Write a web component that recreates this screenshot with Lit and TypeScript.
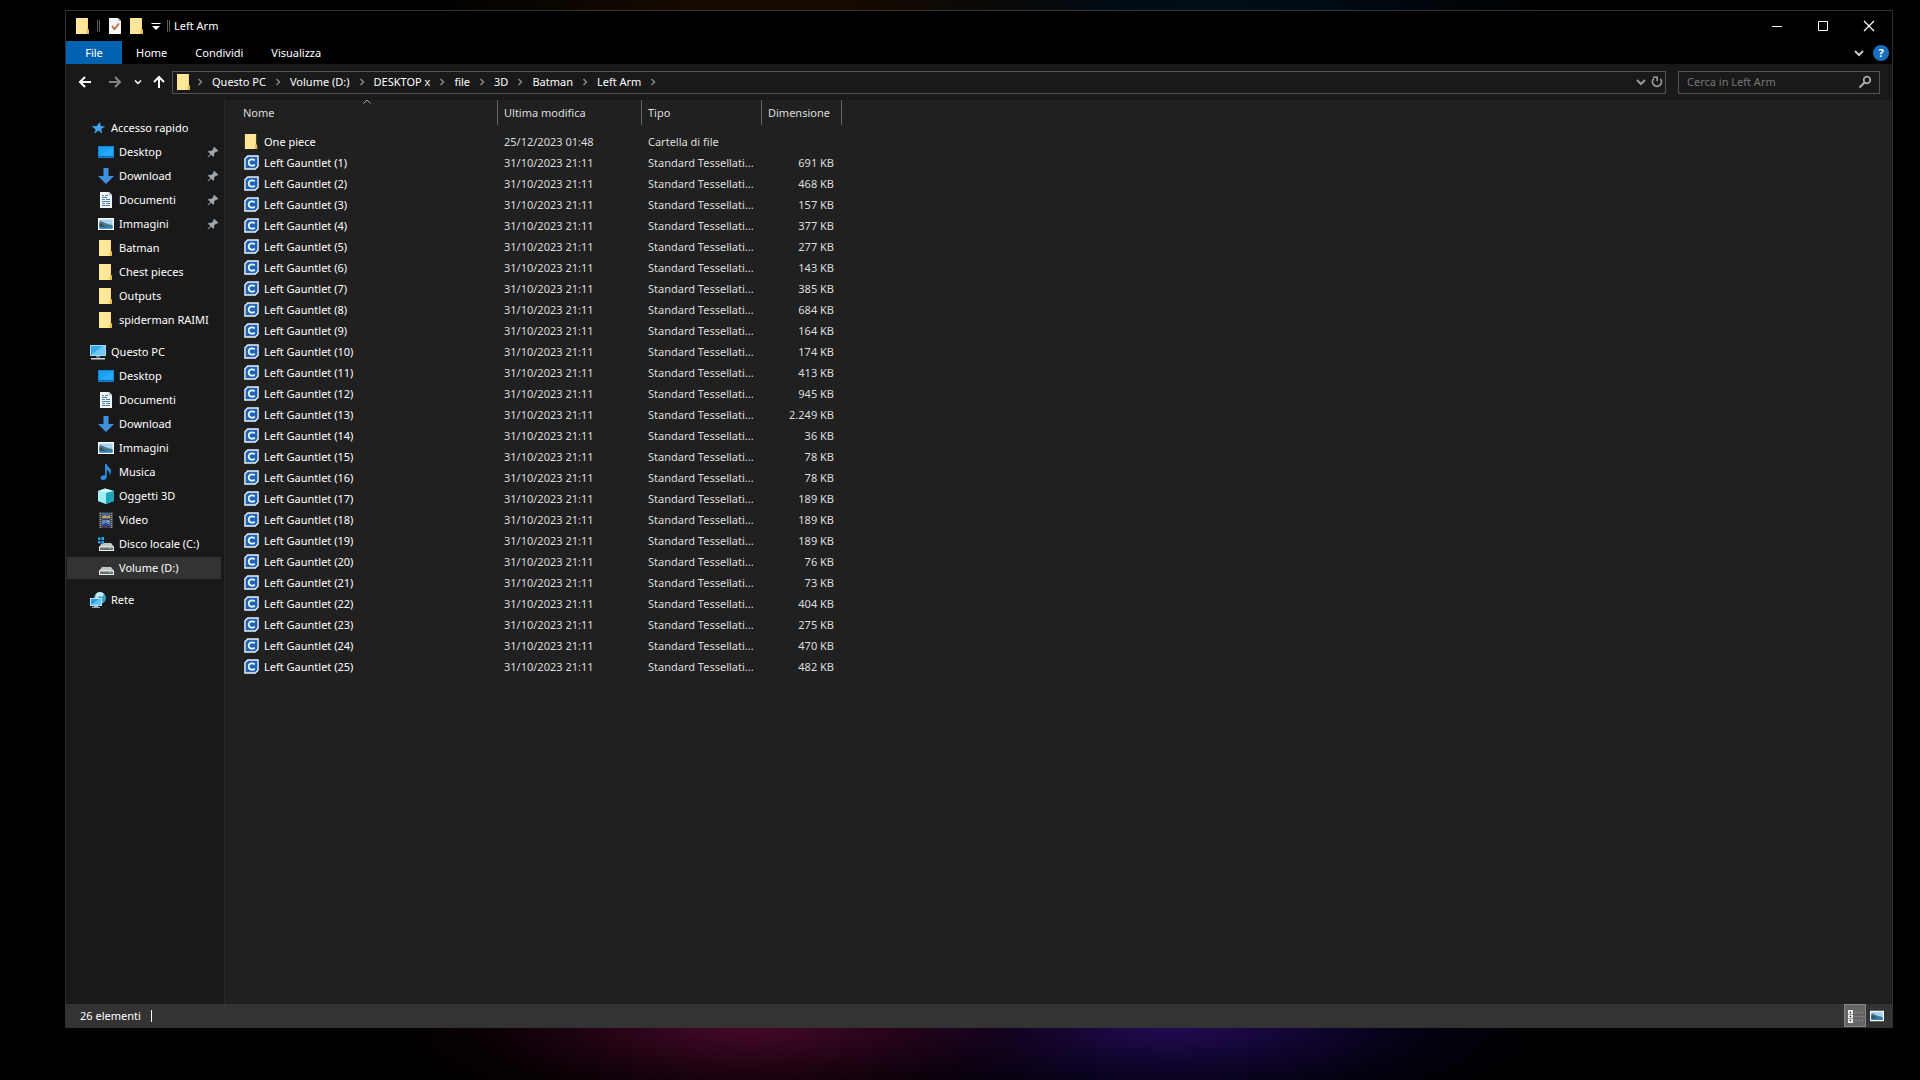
import { LitElement, html, css, svg, TemplateResult } from "lit";
import { customElement, property } from "lit/decorators.js";
import { classMap } from "lit/directives/class-map.js";

const shapes: Record<string, TemplateResult> = {
  folder: svg`<path d="M1 0h12v12l1 1v3H1z" fill="#f7d778"/><path d="M1 0h11v16H1z" fill="#ffe699"/><path d="M12 11h1.500l.5 1v4h-2.500z" fill="#e3b84c"/>`,
  desktop: svg`<path d="M0 2h16v12H0z" fill="#1583d8"/><path d="M1 3h14v9H1z" fill="#18a0f2"/><path d="M1 12 15 3v9z" fill="#35b2fa" opacity=".5"/><path d="M1 12.500h14" stroke="#0b4f93" stroke-dasharray="2 1"/>`,
  download: svg`<path d="M5.500 0h5v8H16l-8 8-8-8h5.500z" fill="#3d8fdd"/>`,
  document: svg`<path d="M2 0h9l3 3v13H2z" fill="#f4f8fa"/><path d="M11 0v3h3" fill="#b8c8d2" stroke="#8ba0ae" stroke-width=".5"/><path d="M4 3.500h2M7 3.500h3M4 5.500h5M4 7.500h3M8 7.500h4M4 9.500h8M4 11.500h3M8 11.500h4M4 13.500h8" stroke="#4b7f9f"/>`,
  image: svg`<path d="M0 2h16v12H0z" fill="#f5f7f8"/><path d="M1.500 3.500h13v9h-13z" fill="#a7d3ee"/><path d="M1.500 5c4 0 5 3 13 4v3.500h-13z" fill="#4d7788"/><path d="M1.500 10.500h13v2h-13z" fill="#2f80b5"/><path d="M1.500 7 8 10.500H1.500z" fill="#2c4c52"/>`,
  music: svg`<path d="M7 0h1.700c.2 3 4.800 4 4.300 8-.2 1.500-.8 2.500-1.500 3.500.5-3-1-5-2.800-5.500V13c0 1.800-1.500 3-3.500 3C3.500 16 2.500 15 2.500 13.700c0-1.700 1.700-2.700 4.500-2.400z" fill="#2b8be0"/>`,
  cube: svg`<path d="m0 3 7-2.500L16 3v10l-8 3-8-3z" fill="#32bdd2"/><path d="m0 3 8 2v11l-8-3z" fill="#9eeff4"/><path d="m0 3 7-2.500L16 3 8 5z" fill="#d5fbfb"/><path d="m8 5 8-2v10l-8 3z" fill="#20a5bb"/>`,
  video: svg`<path d="M1 0h14v16H1z" fill="#3c3e42"/><path d="M2.500 1v15M13.500 1v15" stroke="#a3a5a7" stroke-width="1.500" stroke-dasharray="1 1"/><path d="M4 1h8v6H4z" fill="#45649d"/><path d="M4 8h8v7H4z" fill="#587fc4"/><path d="m4 5 3-2 2 2 3-2v3H4z" fill="#d3a53d"/><path d="m4 13 4-2 4 2v2H4z" fill="#31407e"/><path d="M9 9h2v1H9z" fill="#d8c56c"/>`,
  disk: svg`<path d="M4 7h9l3 4H1z" fill="#c4c6c7"/><path d="M1 10.500h15v4.500H1z" fill="#edefef"/><path d="M2 11.500h13v2.500H2z" fill="#686c6e"/><path d="M11 12h2v1h-2z" fill="#45e05c"/>`,
  system: svg`<path d="M4 7h9l3 4H1z" fill="#c4c6c7"/><path d="M1 10.500h15v4.500H1z" fill="#edefef"/><path d="M2 11.500h13v2.500H2z" fill="#686c6e"/><path d="M11 12h2v1h-2z" fill="#45e05c"/><path d="M0 1.500h2.500V4H0zM3.500 1H6v3H3.500zM0 5h2.500v2.500H0zM3.500 5H6v3H3.500z" fill="#25a8ed"/>`,
  pc: svg`<path d="M0 1h16v11H0z" fill="#9edcf8"/><path d="M1 2h14v9H1z" fill="#37a9e8"/><path d="m1 11 12-9h2v9z" fill="#72c9f5"/><path d="M6 12h4v1.500H6z" fill="#77909c"/><path d="M1 14h14v1.500H1z" fill="#cedbe2"/>`,
  network: svg`<circle cx="10" cy="6" r="6" fill="#3e9bc4"/><path d="M6 2c3-3 6-2 8 0l-2 3-3-1-1 3-3-1z" fill="#bfeaf0"/><path d="M0 6h12v8H0z" fill="#b4e5fb"/><path d="M1 7h10v6H1z" fill="#2a9ae0"/><path d="m1 13 8-6h2v6z" fill="#65c1f3"/><path d="M4 14h4v1h2v1H2v-1h2z" fill="#9cb5c1"/>`,
  star: svg`<path d="m10 2 .8 4 4.700.4-4 2.400.5 5-3.400-3.200L4 14l1.600-4.600L1.500 6l4.800.2z" fill="#3ea2ec"/>`,
  stl: svg`<path d="M4 1h11v11l-3 3H1V4z" fill="#2063b4" stroke="#e9f3fb" stroke-width="1.500"/><path d="M11.500 5.500C8 3.800 5 5 5 8s3 4.200 6.500 2.500" fill="none" stroke="#e9f7ff" stroke-width="2"/>`,
  check: svg`<path d="M2 0h9l3 3v13H2z" fill="#f7f7f7"/><path d="M11 0v3h3" fill="#bbb"/><path d="m5 8 2.500 3L12 5.500" fill="none" stroke="#c0643b" stroke-width="1.800"/>`,
  pin: svg`<path d="m9.500 3 4 4-1.500.8-1-.1-1.900 1.900.2 2.400-1.100.7-2.100-2L3 13.500l-.5-.5 2.800-3L3 7.800l.8-1 2.400.1 2.200-2.200-.2-1z" fill="#9da4aa"/>`,
  customize: svg`<path d="M3.500 5.500h9" stroke="#fff"/><path d="M4 8h8l-4 4z" fill="#fff"/>`,
  minimize: svg`<path d="M3 8.500h10" stroke="#fff"/>`,
  maximize: svg`<path d="M3.500 3.500h9v9h-9z" fill="none" stroke="#fff"/>`,
  close: svg`<path d="m3 3 10 10M13 3 3 13" stroke="#fff" stroke-width="1.200"/>`,
  down: svg`<path d="m4 6 4 4 4-4" fill="none" stroke="currentColor" stroke-width="2"/>`,
  right: svg`<path d="m6.500 5 3 3-3 3" fill="none" stroke="#858585" stroke-width="1.500"/>`,
  sort: svg`<path d="m4.500 9.500 3.500-3.500 3.500 3.500" fill="none" stroke="#aaa"/>`,
  arrow: svg`<path d="M14 8H3M8 3 3 8l5 5" fill="none" stroke="currentColor" stroke-width="2"/>`,
  refresh: svg`<path d="M4.700 4.700A4.500 4.500 0 1 0 11.500 5" fill="none" stroke="currentColor" stroke-width="1.800"/><path d="M4 3.300h4.200v4" fill="none" stroke="currentColor" stroke-width="1.600"/>`,
  search: svg`<circle cx="10" cy="6" r="3.300" fill="none" stroke="currentColor" stroke-width="1.700"/><path d="m7.500 8.500-5 5" stroke="currentColor" stroke-width="2.200"/>`,
  details: svg`<path d="M1 2h5v13H1z" fill="#eee"/><path d="M3 4h1v1H3zM3 8h1v1H3zM3 12h1v1H3z" fill="#222" stroke="#222" stroke-width=".5"/><path d="M0 6.500h7M0 10.500h7" stroke="#666" stroke-width=".6"/><path d="M8 4.500h8M8 8.500h8M8 12.500h8" stroke="#858585" stroke-dasharray="2 1"/>`,
};

@customElement("ui-icon")
class UiIcon extends LitElement {
  @property() name = "";
  static styles = css`
    :host { display: inline-flex; flex: none; width: 16px; height: 16px; }
    .glyph { width: 100%; height: 100%; display: block; }
  `;
  render() {
    return html`<svg class="glyph" viewBox="0 0 16 16" aria-hidden="true">${shapes[this.name]}</svg>`;
  }
}

interface Place { icon: string; label: string; pinned?: boolean; selected?: boolean; }

const groups: { root: Place; children: Place[] }[] = [
  {
    root: { icon: "star", label: "Accesso rapido" },
    children: [
      { icon: "desktop", label: "Desktop", pinned: true },
      { icon: "download", label: "Download", pinned: true },
      { icon: "document", label: "Documenti", pinned: true },
      { icon: "image", label: "Immagini", pinned: true },
      { icon: "folder", label: "Batman" },
      { icon: "folder", label: "Chest pieces" },
      { icon: "folder", label: "Outputs" },
      { icon: "folder", label: "spiderman RAIMI" },
    ],
  },
  {
    root: { icon: "pc", label: "Questo PC" },
    children: [
      { icon: "desktop", label: "Desktop" },
      { icon: "document", label: "Documenti" },
      { icon: "download", label: "Download" },
      { icon: "image", label: "Immagini" },
      { icon: "music", label: "Musica" },
      { icon: "cube", label: "Oggetti 3D" },
      { icon: "video", label: "Video" },
      { icon: "system", label: "Disco locale (C:)" },
      { icon: "disk", label: "Volume (D:)", selected: true },
    ],
  },
  { root: { icon: "network", label: "Rete" }, children: [] },
];

const sizes = ["691", "468", "157", "377", "277", "143", "385", "684", "164", "174", "413", "945", "2.249",
  "36", "78", "78", "189", "189", "189", "76", "73", "404", "275", "470", "482"];

const files = [
  { icon: "folder", name: "One piece", date: "25/12/2023 01:48", type: "Cartella di file", size: "" },
  ...sizes.map((size, i) => ({
    icon: "stl",
    name: `Left Gauntlet (${i + 1})`,
    date: "31/10/2023 21:11",
    type: "Standard Tessellati...",
    size: `${size} KB`,
  })),
];

const crumbs = ["Questo PC", "Volume (D:)", "DESKTOP x", "file", "3D", "Batman", "Left Arm"];

@customElement("app-root")
class AppRoot extends LitElement {
  static styles = css`
    :host {
      display: flex;
      box-sizing: border-box;
      min-height: 100vh;
      padding: 10px 27px 52px 65px;
      color: #fff;
      font: 11px/16px "Noto Sans", "Open Sans", sans-serif;
      background:
        radial-gradient(ellipse 380px 110px at 39% calc(100% - 60px), #4a0a2c 0%, #3c062299 40%, #1c021055 70%, transparent 100%),
        radial-gradient(ellipse 380px 110px at 61% calc(100% - 60px), #240c58 0%, #1a084c99 40%, #0a022c55 70%, transparent 100%),
        radial-gradient(ellipse 360px 60px at 40% 20px, #201000 0%, transparent 100%),
        radial-gradient(ellipse 360px 60px at 63% 20px, #001220 0%, transparent 100%),
        #000;
    }
    * { box-sizing: border-box; }
    button, input { font: inherit; color: inherit; background: none; border: 0; padding: 0; margin: 0; }
    a { color: inherit; text-decoration: none; }
    .window { flex: 1; display: flex; flex-direction: column; border: 1px solid #303030; background: #191919; min-width: 0; }
    .titlebar { display: flex; align-items: center; height: 30px; background: #000; padding-left: 6px; }
    .quick { display: flex; align-items: center; }
    .tool { display: flex; align-items: center; justify-content: center; width: 22px; height: 22px; }
    .bar { width: 3px; height: 12px; border: solid #5c5c5c; border-width: 0 1px; margin: 0 4px 0 3px; }
    .tool.slim { width: 16px; }
    .title { margin: 0; font: inherit; }
    .caption { margin-left: auto; display: flex; }
    .caption-button { display: flex; align-items: center; justify-content: center; width: 46px; height: 30px; }
    .tabs { display: flex; align-items: center; height: 23px; background: #000; }
    .tab { height: 23px; padding: 0 14px; }
    .tab.file { width: 56px; background: #0063b1; }
    .tabs-end { margin-left: auto; display: flex; align-items: center; gap: 6px; padding-right: 3px; color: #c8c8c8; }
    .help { width: 16px; height: 16px; border-radius: 50%; background: #1871bd; color: #fff; font-weight: 700; line-height: 16px; }
    .plain { display: flex; }
    .nav { display: flex; align-items: center; height: 36px; padding: 0 12px 0 4px; }
    .move { display: flex; justify-content: center; width: 30px; }
    .move.off { color: #858585; }
    .move.narrow { width: 16px; }
    .move.up { width: 26px; }
    .up ui-icon { transform: rotate(90deg); }
    .forward ui-icon { transform: rotate(180deg); }
    .small { width: 12px; height: 12px; }
    .address { flex: 1; display: flex; align-items: center; height: 23px; border: 1px solid #535353; padding-left: 3px; margin-right: 12px; color: #999; }
    .crumbs { display: flex; align-items: center; flex: 1; margin: 0 0 0 -4px; padding: 0; list-style: none; color: #fff; }
    .crumb { display: flex; align-items: center; }
    .crumb ui-icon { margin: 0 4px; }
    .search { display: flex; align-items: center; width: 202px; height: 23px; border: 1px solid #535353; padding: 0 6px 0 8px; color: #aaa; }
    .query { flex: 1; min-width: 0; outline: 0; }
    .query::placeholder { color: #767676; opacity: 1; }
    .body { flex: 1; display: flex; }
    .side { width: 159px; flex: none; padding: 16px 3px 0 1px; border-right: 1px solid #2a2a2a; display: flex; flex-direction: column; gap: 8px; }
    .group { list-style: none; margin: 0; padding: 0; }
    .slot { padding: 1px 0; }
    .place { display: flex; align-items: center; gap: 5px; height: 22px; padding-left: 31px; white-space: nowrap; }
    .place.root { padding-left: 23px; }
    .place.selected { background: #333; }
    .place .name { flex: 1; }
    .main { flex: 1; background: #202020; min-width: 0; }
    .files { border-collapse: separate; border-spacing: 0; table-layout: fixed; width: 617px; }
    .c-name { width: 273px; }
    .c-date { width: 144px; }
    .c-type { width: 120px; }
    .c-size { width: 80px; }
    th, td { padding: 0 6px; text-align: left; font-weight: 400; white-space: nowrap; color: #dedede; }
    th { height: 25px; border-right: 1px solid #636363; }
    th.first { padding-left: 18px; position: relative; }
    .sort { display: flex; align-items: center; height: 25px; }
    .caret { position: absolute; left: calc(50% - 2px); top: -6px; }
    .files tbody::before { content: ""; display: table-row; height: 6px; }
    td { height: 21px; }
    td.first { padding-left: 19px; color: #fff; }
    td.size { text-align: right; padding-right: 8px; }
    .entry { display: flex; align-items: center; gap: 5px; }
    .entry ui-icon { width: 15px; height: 15px; }
    .status { display: flex; align-items: center; height: 23px; background: #333; padding: 0 4px 0 14px; }
    .count { padding-right: 10px; line-height: 12px; border-right: 1px solid #fff; }
    .views { margin-left: auto; display: flex; }
    .view { display: flex; align-items: center; justify-content: center; width: 22px; height: 23px; }
    .view.on { background: #666; border: 1px solid #858585; }
    .view:not(.on) ui-icon { width: 14px; height: 14px; }
  `;

  private place(p: Place, root = false) {
    const cls = { place: true, root, selected: !!p.selected };
    return html`<li class="slot"><a href="#" class=${classMap(cls)}>
      <ui-icon name=${p.icon}></ui-icon><span class="name">${p.label}</span>
      ${p.pinned ? html`<ui-icon name="pin"></ui-icon>` : ""}
    </a></li>`;
  }

  render() {
    return html`
      <div class="window">
        <header class="titlebar">
          <div class="quick">
            <button class="tool" aria-label="Menu della finestra"><ui-icon name="folder"></ui-icon></button>
            <span class="bar"></span>
            <button class="tool" aria-label="Proprietà"><ui-icon name="check"></ui-icon></button>
            <button class="tool" aria-label="Nuova cartella"><ui-icon name="folder"></ui-icon></button>
            <button class="tool slim" aria-label="Personalizza"><ui-icon name="customize"></ui-icon></button>
            <span class="bar"></span>
          </div>
          <h1 class="title">Left Arm</h1>
          <div class="caption">
            <button class="caption-button" aria-label="Riduci a icona"><ui-icon name="minimize"></ui-icon></button>
            <button class="caption-button" aria-label="Ingrandisci"><ui-icon name="maximize"></ui-icon></button>
            <button class="caption-button" aria-label="Chiudi"><ui-icon name="close"></ui-icon></button>
          </div>
        </header>
        <div class="tabs">
          <button class="tab file">File</button>
          <button class="tab">Home</button>
          <button class="tab">Condividi</button>
          <button class="tab">Visualizza</button>
          <div class="tabs-end">
            <button class="plain" aria-label="Espandi barra multifunzione"><ui-icon name="down"></ui-icon></button>
            <button class="help" aria-label="Guida">?</button>
          </div>
        </div>
        <nav class="nav">
          <button class="move" aria-label="Indietro"><ui-icon name="arrow"></ui-icon></button>
          <button class="move off forward" aria-label="Avanti"><ui-icon name="arrow"></ui-icon></button>
          <button class="move narrow" aria-label="Percorsi recenti"><ui-icon class="small" name="down"></ui-icon></button>
          <button class="move up" aria-label="Su"><ui-icon name="arrow"></ui-icon></button>
          <div class="address">
            <ui-icon name="folder"></ui-icon>
            <ul class="crumbs">
              <li class="crumb"><ui-icon name="right"></ui-icon></li>
              ${crumbs.map((c) => html`<li class="crumb"><a href="#">${c}</a><ui-icon name="right"></ui-icon></li>`)}
            </ul>
            <button class="plain" aria-label="Percorsi precedenti"><ui-icon name="down"></ui-icon></button>
            <button class="plain" aria-label="Aggiorna"><ui-icon name="refresh"></ui-icon></button>
          </div>
          <label class="search">
            <input class="query" type="text" placeholder="Cerca in Left Arm" aria-label="Cerca in Left Arm" />
            <ui-icon name="search"></ui-icon>
          </label>
        </nav>
        <div class="body">
          <aside class="side">
            ${groups.map((g) => html`<ul class="group">${this.place(g.root, true)}${g.children.map((c) => this.place(c))}</ul>`)}
          </aside>
          <main class="main">
            <table class="files">
              <colgroup><col class="c-name" /><col class="c-date" /><col class="c-type" /><col class="c-size" /></colgroup>
              <thead>
                <tr>
                  <th class="first" scope="col"><button class="sort">Nome<ui-icon class="caret" name="sort"></ui-icon></button></th>
                  <th scope="col"><button class="sort">Ultima modifica</button></th>
                  <th scope="col"><button class="sort">Tipo</button></th>
                  <th scope="col"><button class="sort">Dimensione</button></th>
                </tr>
              </thead>
              <tbody>
                ${files.map((f) => html`<tr>
                  <td class="first"><span class="entry"><ui-icon name=${f.icon}></ui-icon>${f.name}</span></td>
                  <td>${f.date}</td>
                  <td>${f.type}</td>
                  <td class="size">${f.size}</td>
                </tr>`)}
              </tbody>
            </table>
          </main>
        </div>
        <footer class="status">
          <span class="count">26 elementi</span>
          <div class="views">
            <button class="view on" aria-label="Dettagli"><ui-icon name="details"></ui-icon></button>
            <button class="view" aria-label="Icone grandi"><ui-icon name="image"></ui-icon></button>
          </div>
        </footer>
      </div>
    `;
  }
}
